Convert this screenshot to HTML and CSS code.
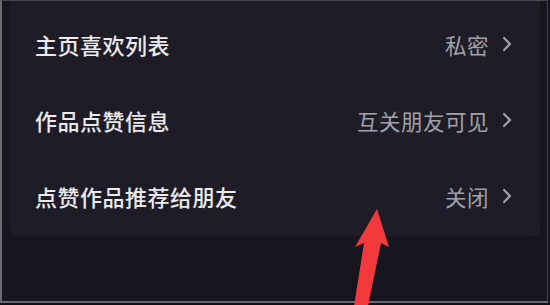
FILE: index.html
```html
<!DOCTYPE html>
<html lang="zh">
<head>
<meta charset="utf-8">
<link rel="stylesheet" href="styles.css">
</head>
<body>
<div class="frame">
  <div class="card">
    <div class="row">
      <span class="label">主页喜欢列表</span>
      <span class="value">私密<svg class="chev" viewBox="0 0 10 16" width="10" height="16"><path d="M2 2 L8 8 L2 14" /></svg></span>
    </div>
    <div class="row">
      <span class="label">作品点赞信息</span>
      <span class="value">互关朋友可见<svg class="chev" viewBox="0 0 10 16" width="10" height="16"><path d="M2 2 L8 8 L2 14" /></svg></span>
    </div>
    <div class="row">
      <span class="label">点赞作品推荐给朋友</span>
      <span class="value">关闭<svg class="chev" viewBox="0 0 10 16" width="10" height="16"><path d="M2 2 L8 8 L2 14" /></svg></span>
    </div>
  </div>
  <svg class="arrow" viewBox="0 0 550 305" width="550" height="305">
    <polygon points="377,209 389,247 381,243 368,306 354,306 364,243 355,247" />
  </svg>
</div>
</body>
</html>
```

FILE: styles.css
```css
html, body {
  margin: 0;
  padding: 0;
  background: #111017;
}
body {
  width: 550px;
  height: 305px;
  overflow: hidden;
  font-family: "Noto Sans CJK SC", "Noto Sans", sans-serif;
}
.frame {
  position: relative;
  box-sizing: border-box;
  width: 548px;
  height: 303px;
  background: #17161e;
  border-top: 1px solid #4c4b53;
  border-left: 2px solid #6b6a72;
  border-right: 1px solid #45444c;
  border-bottom: 2px solid #6b6a72;
}
.card {
  margin-left: 8px;
  width: 530px;
  box-sizing: border-box;
  padding: 5px 28px 0 25px;
  height: 235px;
  background: #1e1d27;
  border-radius: 0 0 6px 6px;
}
.row {
  height: 76px;
  display: flex;
  align-items: center;
  justify-content: space-between;
}
.label {
  font-size: 22px;
  letter-spacing: 0.5px;
  color: #ebebee;
  font-weight: 500;
}
.value {
  display: flex;
  align-items: center;
  gap: 13px;
  font-size: 21.5px;
  letter-spacing: 0.5px;
  color: #a3a2aa;
}
.chev path {
  fill: none;
  stroke: #a3a2aa;
  stroke-width: 2.2;
  stroke-linecap: round;
  stroke-linejoin: round;
}
.arrow {
  position: absolute;
  left: -2px;
  top: -1px;
}
.arrow polygon {
  fill: #f23a3c;
}
```
